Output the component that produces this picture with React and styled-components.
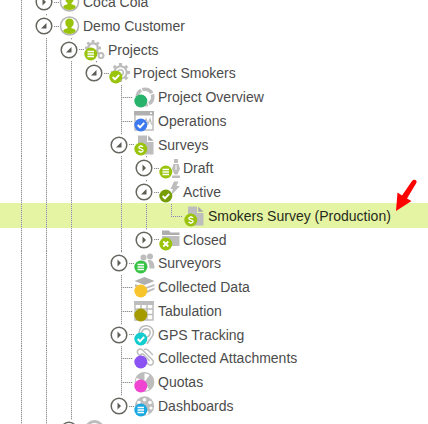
import React, { useState } from 'react'
import styled, { createGlobalStyle, css } from 'styled-components'

const GlobalStyle = createGlobalStyle`
  body {
    margin: 0;
    background: #fff;
    font-family: 'Liberation Sans', Arial, sans-serif;
  }
`

const GREY = '#bdbdbd'
const LIME = '#9ac40c'

const dots = direction =>
  `repeating-linear-gradient(${direction}, #8f8f8f 0 1px, #dedede 1px 2px)`

const Viewport = styled.main`
  height: 100vh;
  overflow: hidden;
`

const Tree = styled.ul`
  list-style: none;
  margin: -10px 0 0;
  padding: 0;
`

const Row = styled.li`
  display: flex;
  align-items: center;
  height: 24px;
  padding-left: 9px;

  &:nth-child(4n + 3) {
    height: 23px;
  }

  ${({ $selected }) =>
    $selected &&
    css`
      background: #e5f4a3;
      box-shadow: 0 -1px #e5f4a3;
    `}
`

const Guide = styled.span`
  flex: none;
  align-self: stretch;
  width: 25px;
  background: ${({ $line }) => ($line ? dots('to bottom') : 'none')} 12px 0 /
    1px 100% no-repeat;
`

const Elbow = styled(Guide)`
  background: ${dots('to bottom')} 12px 0 / 1px
      ${({ $last }) => ($last ? '50%' : '100%')} no-repeat,
    ${dots('to right')} 12px 50% / 12px 1px no-repeat;
`

const Branch = styled(Guide)`
  display: flex;
  align-items: center;
  background: ${dots('to bottom')} 12px 0 / 1px 2px no-repeat,
    ${dots('to right')} 20px 50% / 5px 1px no-repeat;
`

const Toggle = styled.button`
  width: 18px;
  height: 18px;
  margin: 0 0 0 1px;
  padding: 0;
  border: 0;
  background: none;
  cursor: pointer;

  svg {
    display: block;
  }
`

const IconBox = styled.svg`
  flex: none;
  width: 22px;
  height: 22px;
  margin-right: 2px;
`

const Label = styled.a`
  position: relative;
  font-size: 14px;
  line-height: 20px;
  white-space: nowrap;
  text-decoration: none;
  color: ${({ $selected }) => ($selected ? '#262b1c' : '#4c4c4c')};
`

const Pointer = styled.svg`
  position: absolute;
  left: calc(100% + 4px);
  bottom: 14px;
  width: 22px;
  height: 34px;
`

const gearTeeth = (cx, cy, r, count) =>
  Array.from({ length: count }, (_, i) => (
    <rect
      key={i}
      x={cx - r / 6}
      y={cy - r}
      width={r / 3}
      height={r / 3}
      fill={GREY}
      transform={`rotate(${(360 / count) * i} ${cx} ${cy})`}
    />
  ))

const art = {
  person: (
    <>
      <circle cx="10.5" cy="11" r="9" fill="#fff" stroke="#b5b5b5" strokeWidth="1.5" />
      <path
        d="M10.5 3.5c2.800 0 4.200 1.700 4.200 4.200 0 2-.9 3.500-2.200 4.300v1.300c2.700.5 4.300 1.300 4.300 3-1.600 1.800-3.800 2.700-6.300 2.700s-4.700-.9-6.300-2.700c0-1.700 1.600-2.500 4.300-3V12c-1.300-.8-2.200-2.300-2.200-4.300 0-2.500 1.400-4.200 4.200-4.200z"
        fill={LIME}
      />
    </>
  ),
  group: <circle cx="10.5" cy="11" r="8.5" fill="#fff" stroke={GREY} strokeWidth="3" />,
  gears: (
    <>
      {gearTeeth(9, 9, 8, 8)}
      <circle cx="9" cy="9" r="4.8" fill="none" stroke={GREY} strokeWidth="2.4" />
      <circle cx="17" cy="16.5" r="2.5" fill="none" stroke={GREY} strokeWidth="2" />
    </>
  ),
  gear: (
    <>
      {gearTeeth(11.5, 10.5, 9.5, 8)}
      <circle cx="11.5" cy="10.5" r="6.2" fill="none" stroke={GREY} strokeWidth="2" />
      <circle cx="11.5" cy="10.5" r="2.8" fill="none" stroke={GREY} strokeWidth="1.5" />
    </>
  ),
  donut: (
    <circle
      cx="11"
      cy="11"
      r="7.8"
      fill="none"
      stroke={GREY}
      strokeWidth="3.5"
      strokeDasharray="11 1.25"
      strokeDashoffset="3"
    />
  ),
  chart: (
    <>
      <rect x="1" y="2" width="18" height="18" fill="#fff" stroke={GREY} strokeWidth="1.5" />
      <path d="M0 1h20v4.5H0z" fill="#b0b0b0" />
      <path d="M16 2.5h2V4h-2z" fill="#fff" />
      <path d="M10 13l2-4 2 5 2-5 1.5 5h2" fill="none" stroke={GREY} strokeWidth="1.2" />
    </>
  ),
  doc: (
    <>
      <path d="M4 1.500h9V8h6.500v12.500H4z" fill={GREY} />
      <path d="M14.200 1.500l5.300 5.300h-5.300z" fill="#aaa" />
    </>
  ),
  pen: (
    <>
      <path d="M15 2h4v4h-4zM14.500 7h5l1.500 5-2.500 5.500h-3L13 12z" fill={GREY} />
      <path d="M13 18.500h8V21h-8z" fill={GREY} />
      <path d="M17 8v5" stroke="#fff" />
    </>
  ),
  bolt: <path d="M15 .5h4.500L17.500 5H21l-9.500 10 2.500-7h-2.500z" fill={GREY} />,
  folder: (
    <>
      <path d="M3 1.500h7l1.500 2h9V6H3z" fill="#adadad" />
      <path d="M3 7h17.500v10H3z" fill={GREY} />
    </>
  ),
  people: (
    <>
      <circle cx="9.5" cy="5.5" r="3" fill={GREY} />
      <circle cx="16" cy="4.5" r="3" fill={GREY} />
      <path d="M4.500 15c0-4 2-6 5-6s4 2 4 7z" fill={GREY} />
      <path d="M13.500 8.500c4.500-1.500 7 1.500 7 8h-5c0-3-.5-6-2-8z" fill={GREY} />
    </>
  ),
  layers: (
    <>
      <path d="M10.500 1l10 4-10 4-10-4z" fill="#b0b0b0" />
      <path d="M1 8l9.500 3.500L20.500 8v2L12 13H6l-5-2zM12 15l8.500-3.500v2L13 17z" fill={GREY} />
    </>
  ),
  table: (
    <>
      <path d="M0 1h20v4H0z" fill={GREY} />
      <path d="M1 2v18h18V2M7 2v18M13 2v18M1 9h18M1 14.500h18" fill="none" stroke={GREY} strokeWidth="1.5" />
    </>
  ),
  pin: (
    <path
      d="M5 9C5.500 3.500 9 1.500 13 1.800c4.500.4 7 4 6.300 8-.6 3.300-4 5.700-6.300 10.200M7.500 9c.6-2.800 2.600-4.300 5-4.100 2.500.2 4 2.300 3.700 4.500-.3 2-1.800 3-3.200 3.800"
      fill="none"
      stroke={GREY}
      strokeWidth="1.6"
    />
  ),
  clip: (
    <path
      d="M10 13L4.500 7.300C1.500 4 5.500.2 8.700 3.200l9.500 9.500c3.200 3.500-1 7.300-4.200 4.300L7 9.800C5.300 8 7.700 5.800 9.500 7.500l6 6.300M10 2.500c2-.8 3.500-.2 4.800 1.200l4 4.200"
      fill="none"
      stroke={GREY}
      strokeWidth="1.5"
    />
  ),
  pie: (
    <>
      <circle cx="10.5" cy="11" r="9.3" fill="#fff" stroke={GREY} strokeWidth="1.2" />
      <path d="M10.500 11V1.500A9.500 9.500 0 0 0 2 6.500z" fill={GREY} />
      <path d="M10.500 11L16 3.500c5 4 5.500 11-.5 15.500z" fill={GREY} />
    </>
  ),
  palette: (
    <>
      <circle cx="10.5" cy="11" r="9.7" fill={GREY} />
      <circle cx="5" cy="7.5" r="1.8" fill="#fff" />
      <circle cx="10.5" cy="4.8" r="1.8" fill="#fff" />
      <circle cx="16" cy="7.5" r="1.8" fill="#fff" />
      <circle cx="17" cy="13" r="1.6" fill="#fff" />
      <path d="M10 11l5 7-3 3z" fill="#fff" />
    </>
  )
}

const marks = {
  check: (
    <path d="M3.700 15L6 17.400l4.200-4.600" fill="none" stroke="#fff" strokeWidth="2" />
  ),
  lines: (
    <path d="M3.500 12.500H10M3.500 15H10M3.500 17.500H10" stroke="#fff" strokeWidth="1.3" />
  ),
  cross: <path d="M4.300 12.500l5 5M9.300 12.500l-5 5" stroke="#fff" strokeWidth="1.8" />,
  dollar: (
    <path
      d="M9 13c-.6-1.100-4.200-1.300-4.200.4 0 1.900 4.300 1.100 4.300 3.100 0 1.800-3.800 1.700-4.500.2M6.900 11v1.500M6.900 17.500V19"
      fill="none"
      stroke="#fff"
      strokeWidth="1.3"
    />
  )
}

const Icon = ({ name, badge, mark }) => (
  <IconBox viewBox="0 0 22 22" aria-hidden="true">
    {art[name]}
    {badge && <circle cx="6.8" cy="15" r="6.5" fill={badge} />}
    {mark && marks[mark]}
  </IconBox>
)

// guides holds one character per ancestor level: "|" draws a line, " " leaves a gap
const nodes = [
  { label: 'Coca Cola', guides: '|', open: false, icon: 'person' },
  { label: 'Demo Customer', guides: '|', open: true, icon: 'person' },
  { label: 'Projects', guides: '||', open: true, icon: 'gears', badge: LIME, mark: 'lines' },
  { label: 'Project Smokers', guides: '|||', open: true, icon: 'gear', badge: LIME, mark: 'check' },
  { label: 'Project Overview', guides: '||| ', icon: 'donut', badge: '#27b36b' },
  { label: 'Operations', guides: '||| ', icon: 'chart', badge: '#3c78f0', mark: 'check' },
  { label: 'Surveys', guides: '||| ', open: true, icon: 'doc', badge: LIME, mark: 'dollar' },
  { label: 'Draft', guides: '||| |', open: false, icon: 'pen', badge: LIME, mark: 'lines' },
  { label: 'Active', guides: '||| |', open: true, icon: 'bolt', badge: '#769c08', mark: 'check' },
  {
    label: 'Smokers Survey (Production)',
    guides: '||| ||',
    last: true,
    flagged: true,
    icon: 'doc',
    badge: LIME,
    mark: 'dollar'
  },
  { label: 'Closed', guides: '||| |', open: false, icon: 'folder', badge: LIME, mark: 'cross' },
  { label: 'Surveyors', guides: '||| ', open: false, icon: 'people', badge: '#35c443', mark: 'lines' },
  { label: 'Collected Data', guides: '||| ', icon: 'layers', badge: '#f8c42c' },
  { label: 'Tabulation', guides: '||| ', icon: 'table', badge: '#a39b00' },
  { label: 'GPS Tracking', guides: '||| ', open: false, icon: 'pin', badge: '#12cccd', mark: 'check' },
  { label: 'Collected Attachments', guides: '||| ', icon: 'clip', badge: '#8b52f4' },
  { label: 'Quotas', guides: '||| ', icon: 'pie', badge: '#ef45d2' },
  { label: 'Dashboards', guides: '||| ', open: false, icon: 'palette', badge: '#18a8e2', mark: 'lines' },
  { label: 'Import', guides: '||', open: false, icon: 'group' }
]

const TreeRow = ({ node, selected, onSelect }) => {
  const { label, guides, open, last, flagged, icon, badge, mark } = node
  const expandable = open !== undefined

  return (
    <Row
      role="treeitem"
      aria-level={guides.length}
      aria-expanded={open}
      aria-selected={selected}
      $selected={selected}
    >
      {guides.split('').map((guide, i) => (
        <Guide key={i} $line={guide === '|'} />
      ))}
      {expandable ? (
        <Branch>
          <Toggle type="button" aria-label={`${open ? 'Collapse' : 'Expand'} ${label}`}>
            <svg width="18" height="18" viewBox="0 0 18 18">
              <circle cx="9" cy="9" r="7.8" fill="#fff" stroke="#66665f" strokeWidth="1.5" />
              <path
                d={open ? 'M11.500 6v5.500H6z' : 'M7.500 5.500L11 9l-3.500 3.500z'}
                fill="#5c5c56"
              />
            </svg>
          </Toggle>
        </Branch>
      ) : (
        <Elbow $last={last} />
      )}
      <Icon name={icon} badge={badge} mark={mark} />
      <Label
        href="#"
        $selected={selected}
        onClick={e => {
          e.preventDefault()
          onSelect(label)
        }}
      >
        {label}
        {flagged && (
          <Pointer viewBox="0 0 22 34" aria-hidden="true">
            <path
              d="M1 33L2.500 14.500l4.500 3L17 3q1.500-2 3.500-1t.5 3.500L12 20.500l4.500 2.500z"
              fill="#fe0000"
            />
          </Pointer>
        )}
      </Label>
    </Row>
  )
}

const App = () => {
  const [current, setCurrent] = useState('Smokers Survey (Production)')

  return (
    <Viewport>
      <GlobalStyle />
      <Tree role="tree" aria-label="Customers">
        {nodes.map(node => (
          <TreeRow
            key={node.label}
            node={node}
            selected={node.label === current}
            onSelect={setCurrent}
          />
        ))}
      </Tree>
    </Viewport>
  )
}

export default App
